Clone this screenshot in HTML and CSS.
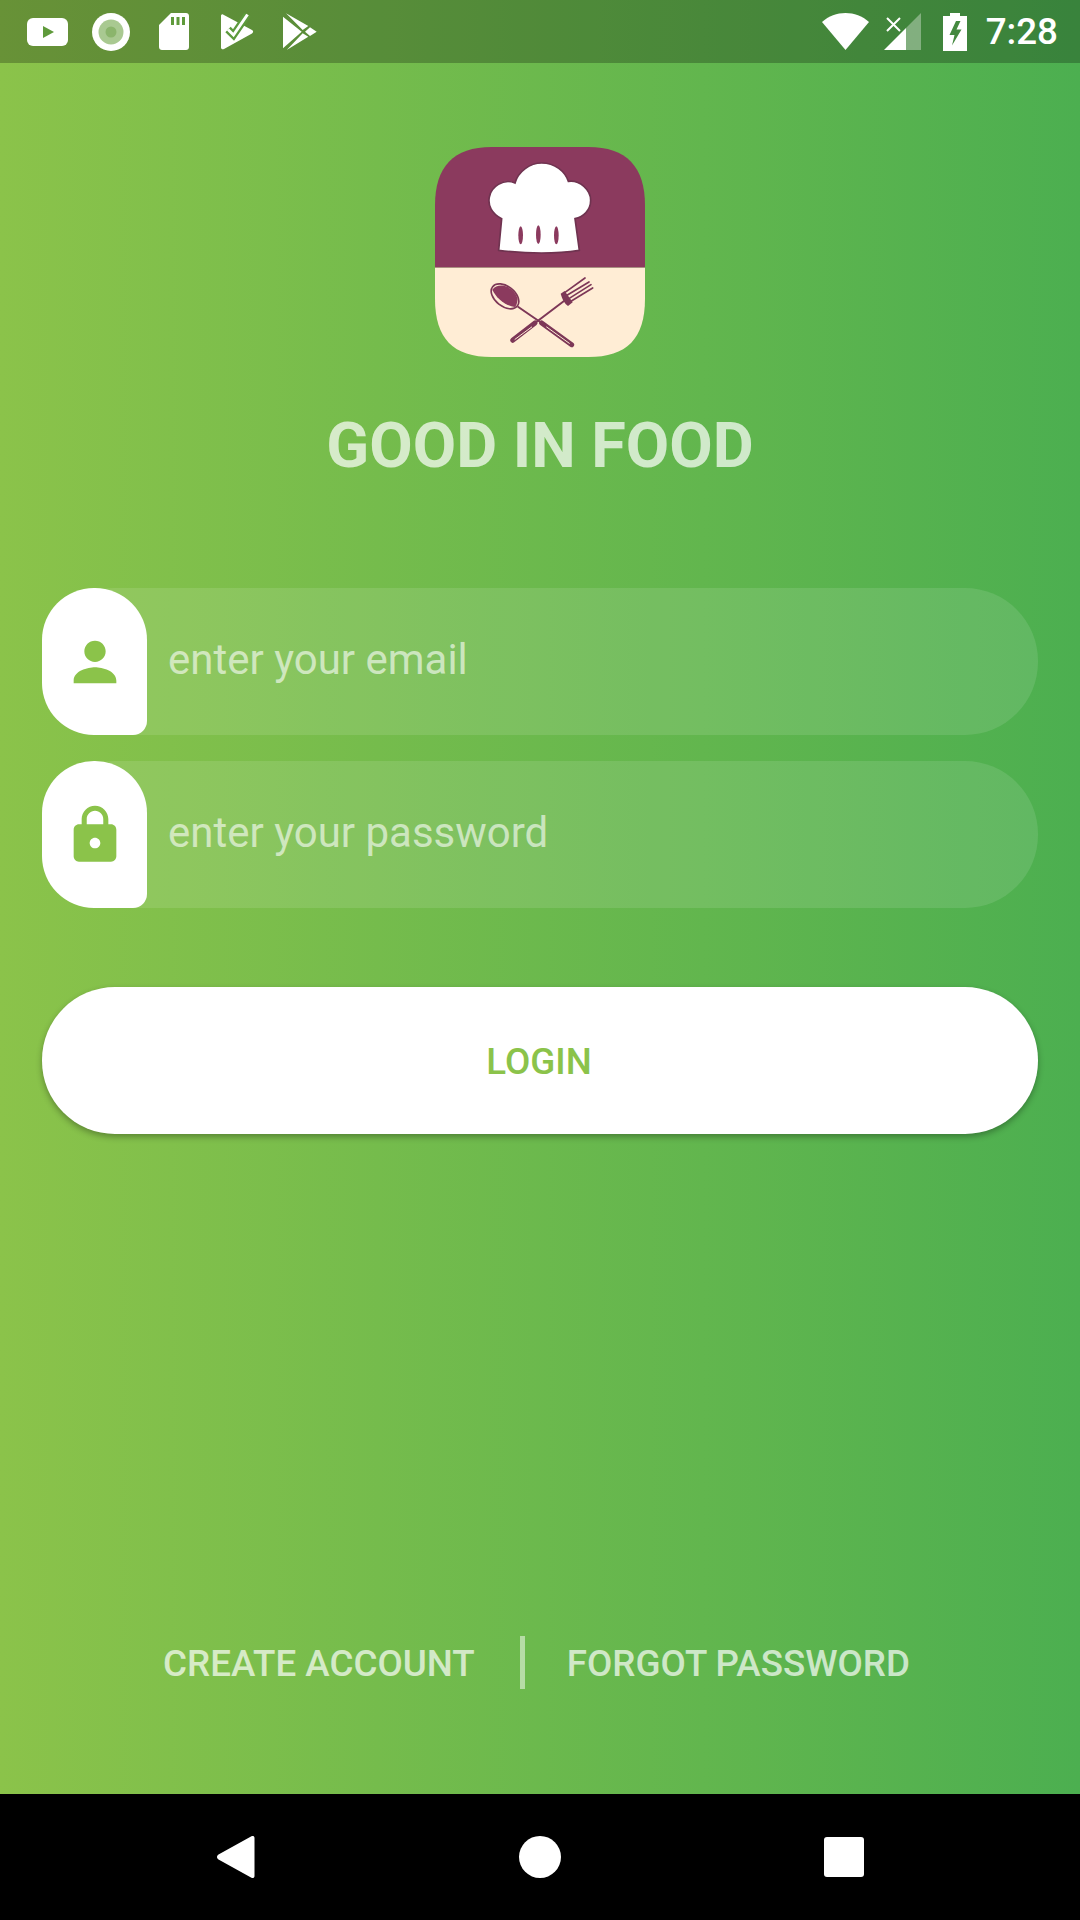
FILE: index.html
```html
<!DOCTYPE html>
<html lang="en">
<head>
    <meta charset="UTF-8">
    <meta name="viewport" content="width=device-width, initial-scale=1.0">
    <title>Good In Food</title>
    <link rel="stylesheet" href="styles.css">
</head>
<body>
    <div class="screen">
        <div class="status-bar">
            <div class="status-left">
                <div class="status-slot"><svg width="42" height="28" viewBox="0 0 42 28"><rect width="41" height="28" rx="6" fill="#fff"/><path d="M16 8l11 6-11 6z" fill="#5f9a3b"/></svg></div>
                <div class="status-slot"><svg width="38" height="38" viewBox="0 0 38 38"><circle cx="19" cy="19" r="19" fill="#fff"/><circle cx="19" cy="19" r="12.5" fill="#a9c991"/><circle cx="19" cy="19" r="5.5" fill="#8bb56c"/></svg></div>
                <div class="status-slot"><svg width="30" height="37" viewBox="0 0 30 37"><path d="M12 0h15c1.700 0 3 1.300 3 3v31c0 1.700-1.300 3-3 3H3c-1.700 0-3-1.300-3-3V12z" fill="#fff"/><path d="M12 4h3v8h-3zM17.500 4h3v8h-3zM23 4h3v8h-3z" fill="#5f9a3b"/></svg></div>
                <div class="status-slot"><svg class="icon-check" width="33" height="37" viewBox="0 0 33 37"><path d="M2 1.500L31 17c1.500 1 1.500 2.400 0 3.400L3 36c-1.500.8-3 0-3-1.500V3c0-1.300 1-2.200 2-1.500z" fill="#fff"/><path d="M7 16.500L12.500 22 26.500 1.500" fill="none" stroke="#5c9a3c" stroke-width="7.500"/><path d="M7 16.500L12.500 22 26.500 1.500" fill="none" stroke="#fff" stroke-width="3"/></svg></div>
                <div class="status-slot"><svg width="34" height="37" viewBox="0 0 34 37"><path d="M0 3.700L18.700 18.700 0 35.300zM3 .3L25.300 13 19.700 17zM3.700 37L25.300 23.700 19.700 20.300zM27 14.300L33.700 18.700 27 23 22 18.700z" fill="#fff"/></svg></div>
            </div>
            <div class="status-right">
                <svg class="icon-wifi" width="47" height="37" viewBox="0 0 47 37"><path d="M0 9C13-3 34-3 47 9L23.500 37z" fill="#fff"/></svg>
                <svg class="icon-signal" width="37" height="37" viewBox="0 0 37 37"><path d="M37 0v37H22V15z" fill="#fff" fill-opacity=".35"/><path d="M22 15v22H0z" fill="#fff"/><path d="M3 5l13 13M16 5L3 18" stroke="#fff" stroke-width="2" fill="none"/></svg>
                <svg class="icon-battery" width="24" height="38" viewBox="0 0 24 38"><path d="M7 0h10v3h7v35H0V3h7z" fill="#fff"/><path d="M13 8L6.500 22h5l-2.500 10.500 9.500-16h-5l4-8.500z" fill="#44893f"/></svg>
                <span class="clock">7:28</span>
            </div>
        </div>

        <main class="content">
            <svg class="logo" width="210" height="210" viewBox="45 50 630 630">
                <defs>
                    <clipPath id="logo-shape">
                        <path d="M215 50H505C620 50 675 110 675 225V505C675 625 620 680 505 680H215C100 680 45 625 45 505V225C45 110 100 50 215 50Z"/>
                    </clipPath>
                </defs>
                <g clip-path="url(#logo-shape)">
                    <rect x="45" y="50" width="630" height="362" fill="#8b3a5e"/>
                    <rect x="45" y="412" width="630" height="268" fill="#ffedd5"/>
                </g>
                <path d="M245 265C215 250 203 225 208 200C213 170 250 143 285 158C295 123 330 98 365 98C405 98 435 123 445 153C480 148 512 180 512 210C512 240 490 260 465 265L478 360C400 372 320 370 236 360Z" fill="#fff" stroke="#6f3350" stroke-width="5"/>
                <g fill="#8b3a5e">
                    <ellipse cx="302" cy="315" rx="7" ry="27"/>
                    <ellipse cx="355" cy="313" rx="7" ry="28"/>
                    <ellipse cx="409" cy="315" rx="7" ry="27"/>
                </g>
                <!-- ложка -->
                <g fill="none" stroke="#7d3757" stroke-linecap="round">
                    <path d="M295 530L365 578" stroke-width="6"/>
                    <path d="M365 578L455 643" stroke-width="15"/>
                    <path d="M380 590L448 639" stroke="#ffedd5" stroke-width="3"/>
                </g>
                <ellipse cx="255" cy="498" rx="47" ry="30" transform="rotate(38 255 498)" fill="#ffedd5" stroke="#7d3757" stroke-width="5"/>
                <path d="M217 478C235 455 280 465 293 505C292 520 288 528 284 530C255 525 230 505 217 478Z" fill="#8b3a5e"/>
                <!-- вилка -->
                <g fill="none" stroke="#7d3757" stroke-linecap="round">
                    <path d="M432 512L345 578" stroke-width="6"/>
                    <path d="M345 578L278 630" stroke-width="15"/>
                    <path d="M335 590L285 627" stroke="#ffedd5" stroke-width="3"/>
                    <path d="M430 490L495 443M436 498L507 455M442 508L513 463M448 516L518 473" stroke-width="5"/>
                </g>
                <path d="M422 490L434 482L458 516L444 527C434 520 426 505 422 490Z" fill="#7d3757"/>
            </svg>

            <h1 class="title">GOOD IN FOOD</h1>

            <div class="field field-email">
                <div class="field-icon">
                    <svg width="64" height="64" viewBox="0 0 24 24"><path d="M12 12c2.210 0 4-1.790 4-4s-1.790-4-4-4-4 1.790-4 4 1.790 4 4 4zm0 2c-2.670 0-8 1.340-8 5v1h16v-1c0-3.660-5.330-5-8-5z"/></svg>
                </div>
                <span class="field-text">enter your email</span>
            </div>
            <div class="field field-password">
                <div class="field-icon">
                    <svg width="64" height="64" viewBox="0 0 24 24"><path d="M18 8h-1V6c0-2.760-2.240-5-5-5S7 3.240 7 6v2H6c-1.100 0-2 .9-2 2v10c0 1.100.9 2 2 2h12c1.100 0 2-.9 2-2V10c0-1.100-.9-2-2-2zm-6 9c-1.100 0-2-.9-2-2s.9-2 2-2 2 .9 2 2-.9 2-2 2zm3.100-9H8.900V6c0-1.710 1.390-3.100 3.100-3.100 1.710 0 3.100 1.390 3.100 3.100v2z"/></svg>
                </div>
                <span class="field-text">enter your password</span>
            </div>

            <button class="login-btn" type="button">LOGIN</button>

            <div class="links">
                <span class="link">CREATE ACCOUNT</span>
                <span class="divider"></span>
                <span class="link">FORGOT PASSWORD</span>
            </div>
        </main>

        <div class="nav-bar">
            <div class="nav-slot"><svg width="38" height="42" viewBox="0 0 38 42"><path d="M34 .5c1.800-1.300 3.500-.3 3.500 1.500v38c0 1.800-1.700 2.800-3.500 1.500L1.500 23.500c-2-1.300-2-3.700 0-5z" fill="#fff"/></svg></div>
            <div class="nav-slot"><svg width="42" height="42" viewBox="0 0 42 42"><circle cx="21" cy="21" r="21" fill="#fff"/></svg></div>
            <div class="nav-slot"><svg width="40" height="40" viewBox="0 0 40 40"><rect width="40" height="40" rx="3" fill="#fff"/></svg></div>
        </div>
    </div>
</body>
</html>
```

FILE: styles.css
```css
* {
    box-sizing: border-box;
}

body {
    margin: 0;
    font-family: Roboto, "Liberation Sans", sans-serif;
}

.screen {
    width: 1080px;
    height: 1920px;
    display: flex;
    flex-direction: column;
    background: linear-gradient(90deg, #8bc34a, #4caf50);
    overflow: hidden;
}

.status-bar {
    height: 63px;
    flex-shrink: 0;
    display: flex;
    justify-content: space-between;
    align-items: center;
    padding: 0 22px 0 16px;
    background-color: rgba(0, 0, 0, 0.25);
}

.status-left,
.status-right {
    display: flex;
    align-items: center;
}

.status-slot {
    width: 63px;
    display: flex;
    justify-content: center;
}

.status-slot svg,
.status-right svg {
    display: block;
}

.icon-check {
    margin-left: 1px;
}

.icon-signal {
    margin-left: 15px;
}

.icon-battery {
    margin-left: 22px;
}

.clock {
    margin-left: 19px;
    color: #fff;
    font-size: 36.75px;
    line-height: 42px;
    font-weight: 500;
}

.content {
    flex: 1;
    display: flex;
    flex-direction: column;
    align-items: center;
    padding: 84px 42px 105px;
}

.logo {
    display: block;
    flex-shrink: 0;
}

.title {
    margin: 54px 0 0;
    color: rgba(255, 255, 255, 0.7);
    font-size: 63px;
    line-height: 70px;
    font-weight: 700;
}

.field {
    width: 100%;
    height: 147px;
    display: flex;
    align-items: center;
    border-radius: 73px;
    background-color: rgba(255, 255, 255, 0.11);
}

.field-email {
    margin-top: 107px;
}

.field-password {
    margin-top: 26px;
}

.field-icon {
    width: 105px;
    height: 147px;
    flex-shrink: 0;
    display: flex;
    align-items: center;
    justify-content: center;
    background-color: #fff;
    border-radius: 52px 52px 14px 52px;
}

.field-icon svg {
    fill: #8bc34a;
}

.field-text {
    margin: -5px 0 0 21px;
    color: rgba(255, 255, 255, 0.6);
    font-size: 42px;
}

.login-btn {
    width: 100%;
    height: 147px;
    margin-top: 79px;
    padding: 2px 2px 0 0;
    flex-shrink: 0;
    border: none;
    border-radius: 73px;
    background-color: #fff;
    color: #8bc34a;
    font-family: inherit;
    font-size: 36.75px;
    font-weight: 500;
    box-shadow: 0 3px 6px rgba(0, 0, 0, 0.3);
    cursor: pointer;
}

.links {
    margin-top: auto;
    display: flex;
    align-items: center;
    padding-right: 7px;
}

.link {
    padding-top: 2px;
    color: rgba(255, 255, 255, 0.7);
    font-size: 36.75px;
    font-weight: 500;
}

.divider {
    width: 5px;
    height: 53px;
    margin: 0 42px 0 45px;
    background-color: rgba(255, 255, 255, 0.5);
}

.nav-bar {
    height: 126px;
    flex-shrink: 0;
    display: flex;
    justify-content: center;
    align-items: center;
    background-color: #000;
}

.nav-slot {
    width: 304px;
    display: flex;
    justify-content: center;
}

.nav-slot svg {
    display: block;
}
```
